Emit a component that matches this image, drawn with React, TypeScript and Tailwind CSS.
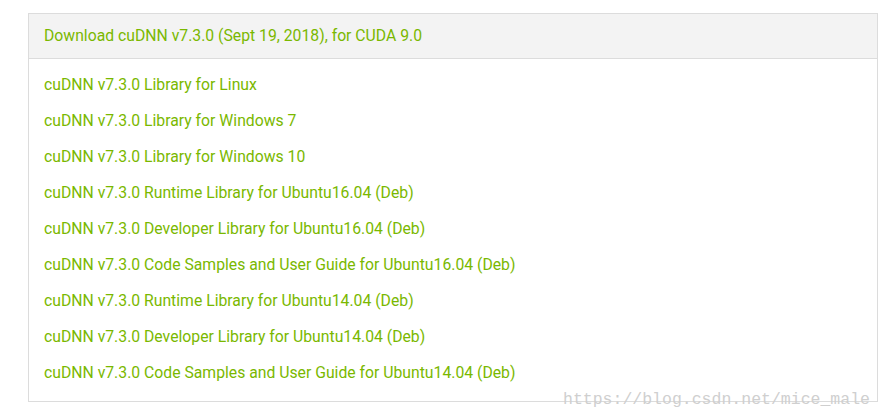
import React from "react";

const items = [
  "cuDNN v7.3.0 Library for Linux",
  "cuDNN v7.3.0 Library for Windows 7",
  "cuDNN v7.3.0 Library for Windows 10",
  "cuDNN v7.3.0 Runtime Library for Ubuntu16.04 (Deb)",
  "cuDNN v7.3.0 Developer Library for Ubuntu16.04 (Deb)",
  "cuDNN v7.3.0 Code Samples and User Guide for Ubuntu16.04 (Deb)",
  "cuDNN v7.3.0 Runtime Library for Ubuntu14.04 (Deb)",
  "cuDNN v7.3.0 Developer Library for Ubuntu14.04 (Deb)",
  "cuDNN v7.3.0 Code Samples and User Guide for Ubuntu14.04 (Deb)",
];

export default function App() {
  return (
    <div className="relative w-[885px] h-[419px] bg-white pl-[28px] pt-[13px]" style={{ fontFamily: "Roboto, 'Noto Sans', sans-serif" }}>
      <div className="w-[850px] h-[389px] border border-[#dcdcdc] flex flex-col">
        <div className="h-[45px] bg-[#f3f3f3] border-b border-[#dcdcdc] flex items-center pl-[15px] text-[15.75px] text-[#7ab800]">
          Download cuDNN v7.3.0 (Sept 19, 2018), for CUDA 9.0
        </div>
        <div className="flex flex-col pl-[15px] pt-[8px]">
          {items.map((t) => (
            <div key={t} className="h-[36px] flex items-center text-[15.75px] text-[#7ab800]">
              {t}
            </div>
          ))}
        </div>
      </div>
      <div className="absolute left-[563px] top-[388px] text-[16.5px] text-[#cfcfcf]" style={{ fontFamily: "'Liberation Mono', monospace" }}>
        https://blog.csdn.net/mice_male
      </div>
    </div>
  );
}
